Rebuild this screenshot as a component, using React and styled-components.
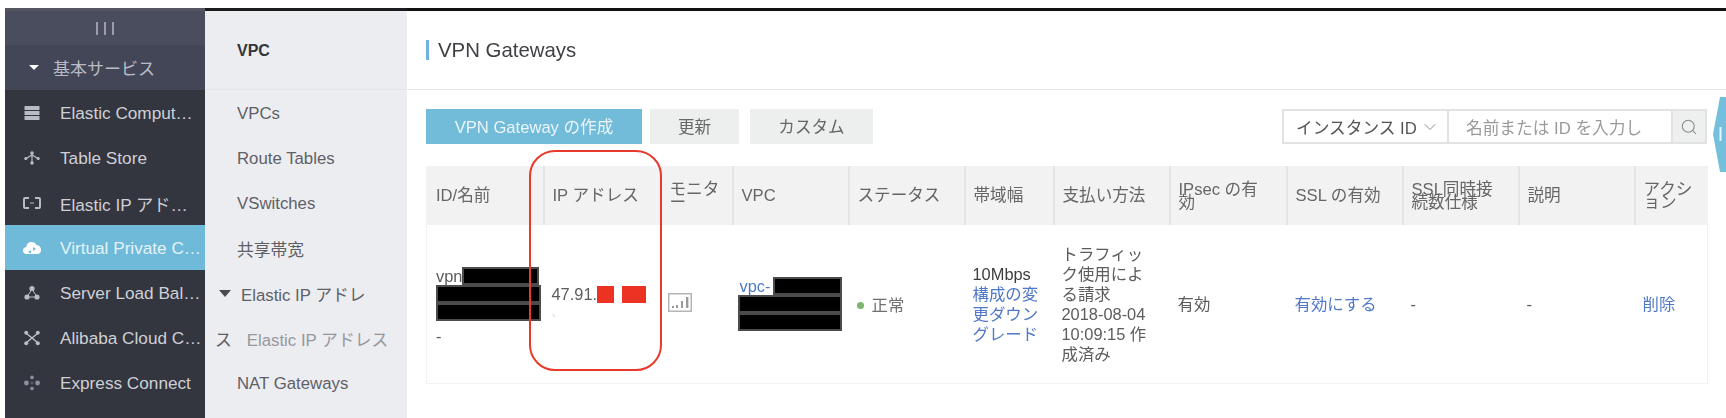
import React from "react"
import styled, { createGlobalStyle } from "styled-components"
import { Search, ChevronDown } from "lucide-react"

const FONT = `"Liberation Sans", "Noto Sans CJK JP", sans-serif`

const COLUMNS = [117, 117, 72, 116, 116, 89, 116, 117, 116, 116, 116, 73]

const App = () => {
  return (
    <Page>
      <GlobalStyle />
      {/* Dark service menu */}
      <Sidebar>
        <Handle>
          <i />
          <i />
          <i />
        </Handle>
        <SectionTitle>
          <Caret />
          基本サービス
        </SectionTitle>
        {services.map(item => (
          <ServiceItem key={item.label} $active={item.active}>
            <ServiceIcon>{item.icon}</ServiceIcon>
            <ServiceLabel>{item.label}</ServiceLabel>
          </ServiceItem>
        ))}
      </Sidebar>

      {/* VPC sub menu */}
      <SubMenu>
        <SubHeader>VPC</SubHeader>
        <SubItem>VPCs</SubItem>
        <SubItem>Route Tables</SubItem>
        <SubItem>VSwitches</SubItem>
        <SubItem>共享帯宽</SubItem>
        <GroupItem>
          <GroupCaret />
          Elastic IP アドレ
        </GroupItem>
        <WrappedItem>
          <span>ス</span>
          <Muted>Elastic IP アドレス</Muted>
        </WrappedItem>
        <SubItem>NAT Gateways</SubItem>
      </SubMenu>

      {/* Content */}
      <Main>
        <TitleBar>
          <Title>VPN Gateways</Title>
        </TitleBar>
        <Body>
          <Toolbar>
            <Actions>
              <Button $primary $width={216}>VPN Gateway の作成</Button>
              <Button $width={89}>更新</Button>
              <Button $width={123} $shift={3}>カスタム</Button>
            </Actions>
            <SearchBox>
              <SearchSelect>
                インスタンス ID
                <ChevronDown size={20} strokeWidth={1} color="#777" />
              </SearchSelect>
              <SearchInput>名前または ID を入力し</SearchInput>
              <SearchButton>
                <Search size={18} strokeWidth={1.4} color="#888" />
              </SearchButton>
            </SearchBox>
          </Toolbar>

          <Table>
            <colgroup>
              {COLUMNS.map((w, i) => (
                <col key={i} width={w} />
              ))}
            </colgroup>
            <thead>
              <tr>
                <Th>ID/名前</Th>
                <Th>IP アドレス</Th>
                <Th>モニタ<br />ー</Th>
                <Th>VPC</Th>
                <Th>ステータス</Th>
                <Th>帯域幅</Th>
                <Th>支払い方法</Th>
                <Th>IPsec の有<br />効</Th>
                <Th>SSL の有効</Th>
                <Th>SSL同時接<br />続数仕様</Th>
                <Th>説明</Th>
                <Th>アクシ<br />ョン</Th>
              </tr>
            </thead>
            <tbody>
              <tr>
                <Td $left={9}>
                  <RedactedLine $offset={4}>
                    vpn
                    <Redacted $width={77} />
                  </RedactedLine>
                  <Redacted $width={105} />
                  <Redacted $width={105} />
                  <Dash>-</Dash>
                </Td>
                <Td>
                  <IpLine>
                    47.91.
                    <RedBlock $width={17} />
                    <Gap />
                    <RedBlock $width={24} />
                  </IpLine>
                  <FaintMark>、</FaintMark>
                </Td>
                <Td>
                  <MonitorIcon viewBox="0 0 24 19">
                    <rect x="0.75" y="0.75" width="22.5" height="17.5" fill="none" stroke="#b4b4b4" strokeWidth="1.5" />
                    <rect x="4" y="13" width="2" height="2" fill="#9a9a9a" />
                    <rect x="8" y="12" width="2" height="3" fill="#9a9a9a" />
                    <rect x="13" y="8" width="2" height="7" fill="#9a9a9a" />
                    <rect x="18" y="4" width="2.4" height="11" fill="#9a9a9a" />
                  </MonitorIcon>
                </Td>
                <Td $left={5}>
                  <RedactedLine>
                    <VpcLink>vpc-</VpcLink>
                    <Redacted $width={69} />
                  </RedactedLine>
                  <Redacted $width={104} />
                  <Redacted $width={104} />
                </Td>
                <Td>
                  <Status>正常</Status>
                </Td>
                <Td>
                  <Dark>10Mbps</Dark>
                  <br />
                  <Link>構成の変<br />更ダウン<br />グレード</Link>
                </Td>
                <Td>
                  トラフィッ<br />ク使用によ<br />る請求<br />2018-08-04<br />10:09:15 作<br />成済み
                </Td>
                <Td>有効</Td>
                <Td><Link>有効にする</Link></Td>
                <Td>-</Td>
                <Td>-</Td>
                <Td><Link>削除</Link></Td>
              </tr>
            </tbody>
          </Table>
        </Body>

        {/* Annotation drawn on top of the screenshot */}
        <Annotation />
        <SideTab viewBox="0 0 13 75">
          <path d="M13 0 L7 0 L0 37 L7 75 L13 75 Z" fill="#74bfdb" />
          <rect x="6.5" y="30" width="2" height="14" fill="#e8f5fa" />
        </SideTab>
      </Main>
    </Page>
  )
}

const services = [
  {
    label: "Elastic Comput…",
    icon: (
      <svg viewBox="0 0 16 16" width="16" height="16" fill="#b9bcc4">
        <rect x="0.5" y="1" width="15" height="4" rx="0.6" />
        <rect x="0.5" y="6" width="15" height="4" rx="0.6" />
        <rect x="0.5" y="11" width="15" height="4" rx="0.6" />
      </svg>
    ),
  },
  {
    label: "Table Store",
    icon: (
      <svg viewBox="0 0 16 16" width="16" height="16" fill="#b9bcc4" stroke="#b9bcc4">
        <path d="M8 3 V12 M2 8.5 L8 5 L14 8.5" fill="none" strokeWidth="1.2" />
        <circle cx="8" cy="3" r="1.8" stroke="none" />
        <circle cx="1.8" cy="8.5" r="1.6" stroke="none" />
        <circle cx="14.2" cy="8.5" r="1.6" stroke="none" />
        <circle cx="8" cy="13" r="1.8" stroke="none" />
      </svg>
    ),
  },
  {
    label: "Elastic IP アド…",
    icon: (
      <svg viewBox="0 0 18 14" width="18" height="14" fill="none" stroke="#b9bcc4" strokeWidth="2">
        <path d="M6 2 H2 Q1 2 1 3 V11 Q1 12 2 12 H6" />
        <path d="M12 2 H16 Q17 2 17 3 V11 Q17 12 16 12 H12" />
        <path d="M7 7 H11" strokeWidth="1" />
      </svg>
    ),
  },
  {
    label: "Virtual Private C…",
    active: true,
    icon: (
      <svg viewBox="0 0 18 14" width="18" height="14">
        <path d="M4 13 Q0 13 0 9.5 Q0 6.5 3.2 6 Q4 1 8.5 1 Q12 1 13.4 4 Q18 4.4 18 9 Q18 13 14 13 Z" fill="#fff" />
        <path d="M10 6 L13 8 L10 10 Z M8 9 L5 11 L8 12.5 Z" fill="#72bbd9" />
      </svg>
    ),
  },
  {
    label: "Server Load Bal…",
    icon: (
      <svg viewBox="0 0 16 16" width="16" height="16" fill="#b9bcc4" stroke="#b9bcc4">
        <path d="M8 4 L3 12 H13 Z" fill="none" strokeWidth="1" />
        <circle cx="8" cy="3.5" r="2.6" stroke="none" />
        <circle cx="3" cy="12" r="2.6" stroke="none" />
        <circle cx="13" cy="12" r="2.6" stroke="none" />
      </svg>
    ),
  },
  {
    label: "Alibaba Cloud C…",
    icon: (
      <svg viewBox="0 0 16 16" width="16" height="16" fill="#b9bcc4" stroke="#b9bcc4">
        <path d="M2 3 L14 13 M14 3 L2 13" fill="none" strokeWidth="1.6" />
        <circle cx="2.2" cy="2.8" r="2" stroke="none" />
        <circle cx="13.8" cy="2.8" r="2" stroke="none" />
        <circle cx="2.2" cy="13.2" r="2" stroke="none" />
        <circle cx="13.8" cy="13.2" r="2" stroke="none" />
      </svg>
    ),
  },
  {
    label: "Express Connect",
    icon: (
      <svg viewBox="0 0 16 16" width="16" height="16" fill="#8d909b">
        <circle cx="8" cy="2.4" r="1.8" />
        <circle cx="8" cy="13.6" r="1.8" />
        <circle cx="2.4" cy="8" r="2.4" />
        <circle cx="13.6" cy="8" r="2.4" />
        <circle cx="8" cy="8" r="1.4" fill="#5b5e6b" />
      </svg>
    ),
  },
]

const GlobalStyle = createGlobalStyle`
  html, body {
    margin: 0;
    padding: 0;
    background: #fff;
  }
`

const Page = styled.div`
  display: flex;
  width: 1726px;
  height: 418px;
  padding: 8px 0 0 5px;
  box-sizing: border-box;
  overflow: hidden;
  font-family: ${FONT};
  filter: blur(0.6px);
`

const Sidebar = styled.nav`
  width: 200px;
  flex: none;
  background: #33353f;
  border-top: 3px solid #55565f;
`

const Handle = styled.div`
  height: 34px;
  display: flex;
  justify-content: center;
  align-items: center;
  gap: 6px;
  background: #4a4d5e;

  i {
    width: 2px;
    height: 13px;
    background: #9b9eaa;
  }
`

const SectionTitle = styled.div`
  height: 45px;
  display: flex;
  align-items: center;
  padding-left: 24px;
  background: #434657;
  color: #b9bcc6;
  font-size: 17px;
`

const Caret = styled.span`
  width: 0;
  height: 0;
  margin-right: 14px;
  border-left: 5px solid transparent;
  border-right: 5px solid transparent;
  border-top: 5px solid #fff;
`

const ServiceItem = styled.div`
  height: 45px;
  display: flex;
  align-items: center;
  background: ${props => (props.$active ? "#6fbad8" : "transparent")};
  color: ${props => (props.$active ? "#e4f2f8" : "#ced0d6")};
  font-size: 17.2px;
`

const ServiceIcon = styled.span`
  width: 55px;
  flex: none;
  display: flex;
  justify-content: center;
  padding-right: 2px;
  box-sizing: border-box;
`

const ServiceLabel = styled.span`
  padding-top: 2px;
  white-space: nowrap;
`

const SubMenu = styled.div`
  width: 202px;
  flex: none;
  background: #ecedf1;
  color: #5f5f66;
  font-size: 16.8px;
  border-top: 3px solid #1c1c1e;
  overflow: hidden;
`

const SubHeader = styled.div`
  height: 79px;
  box-sizing: border-box;
  padding: 31px 0 0 32px;
  color: #33353b;
  font-weight: 700;
  font-size: 16px;
  border-bottom: 1px solid #e4e4e6;
`

const SubItem = styled.div`
  height: 45px;
  box-sizing: border-box;
  padding: 2px 0 0 32px;
  display: flex;
  align-items: center;
  white-space: nowrap;
`

const GroupItem = styled(SubItem)`
  padding-left: 14px;
`

const GroupCaret = styled.span`
  width: 0;
  height: 0;
  margin-right: 10px;
  border-left: 6px solid transparent;
  border-right: 6px solid transparent;
  border-top: 7px solid #4a4a50;
`

const WrappedItem = styled(SubItem)`
  padding-left: 10px;
`

const Muted = styled.span`
  margin-left: 15px;
  color: #96979e;
`

const Main = styled.main`
  position: relative;
  flex: 1;
  min-width: 0;
  border-top: 3px solid #111;
`

const TitleBar = styled.div`
  height: 79px;
  display: flex;
  align-items: center;
  padding-left: 19px;
  box-sizing: border-box;
  border-bottom: 1px solid #e8e8ea;
`

const Title = styled.h1`
  margin: 0;
  padding-left: 9px;
  border-left: 3px solid #6eb4df;
  color: #3f3f44;
  font-size: 20.4px;
  font-weight: 400;
  line-height: 20px;
`

const Body = styled.div`
  padding: 19px 19px 0;
`

const Toolbar = styled.div`
  display: flex;
  justify-content: space-between;
  height: 35px;
  margin-bottom: 22px;
`

const Actions = styled.div`
  display: flex;
  gap: 8px;
`

const Button = styled.div`
  width: ${props => props.$width}px;
  margin-left: ${props => props.$shift || 0}px;
  padding-bottom: 2px;
  box-sizing: border-box;
  display: flex;
  align-items: center;
  justify-content: center;
  background: ${props => (props.$primary ? "#72bbd9" : "#edeeee")};
  color: ${props => (props.$primary ? "#eaf6fb" : "#666")};
  font-size: 16.6px;
`

const SearchBox = styled.div`
  display: flex;
  width: 425px;
  box-sizing: border-box;
  border: 2px solid #e2e2e2;
  color: #555;
  font-size: 16.7px;
`

const SearchSelect = styled.div`
  width: 165px;
  flex: none;
  display: flex;
  align-items: center;
  gap: 3px;
  padding-left: 12px;
  box-sizing: border-box;
  white-space: nowrap;
  border-right: 2px solid #e2e2e2;
`

const SearchInput = styled.div`
  flex: 1;
  display: flex;
  align-items: center;
  padding-left: 17px;
  color: #9a9a9a;
  border-right: 2px solid #e2e2e2;
`

const SearchButton = styled.div`
  width: 32px;
  flex: none;
  display: flex;
  align-items: center;
  justify-content: center;
  background: #eeefef;
`

const Table = styled.table`
  width: 1281px;
  table-layout: fixed;
  border-collapse: collapse;
  border: 1px solid #f1f2f3;
  color: #606060;
  font-size: 16.4px;
`

const Th = styled.th`
  height: 58px;
  padding: 0 0 0 8px;
  background: #f2f2f2;
  border-left: 2px solid #e4e4e4;
  font-size: 16.6px;
  font-weight: 400;
  line-height: 13.5px;
  text-align: left;
  color: #666;
  white-space: nowrap;

  &:first-child {
    padding-left: 9px;
    border-left: 0;
  }
`

const Td = styled.td`
  height: 158px;
  padding: 0 0 0 ${props => props.$left || 8}px;
  line-height: 20px;
  vertical-align: middle;
  white-space: nowrap;
  color: #5c5c5c;
`

const RedactedLine = styled.div`
  display: flex;
  align-items: center;
  height: 18px;
  width: fit-content;
  margin-top: ${props => props.$offset || 0}px;
`

const Redacted = styled.div`
  width: ${props => props.$width}px;
  height: 18px;
  box-sizing: border-box;
  background: #000;
  border: 2px solid #4c4c4c;
`

const Dash = styled.div`
  margin-top: 5px;
`

const IpLine = styled.div`
  display: flex;
  align-items: center;
  height: 18px;
`

const RedBlock = styled.span`
  width: ${props => props.$width}px;
  height: 17px;
  background: #ec3323;
`

const Gap = styled.span`
  width: 8px;
`

const FaintMark = styled.div`
  height: 20px;
  color: #ddd;
  font-size: 12px;
`

const MonitorIcon = styled.svg`
  display: block;
  width: 24px;
  height: 19px;
  margin: -3px 0 0 -1px;
`

const Link = styled.span`
  color: #4f78c9;
`

const VpcLink = styled(Link)`
  width: 35px;
  padding-left: 2px;
  box-sizing: border-box;
`

const Dark = styled.span`
  color: #3d3d3d;
`

const Status = styled.span`
  display: inline-flex;
  align-items: center;
  gap: 8px;
  color: #707070;

  &::before {
    content: "";
    width: 7px;
    height: 7px;
    border-radius: 50%;
    background: #7db56f;
  }
`

const Annotation = styled.div`
  position: absolute;
  left: 122px;
  top: 139px;
  width: 133px;
  height: 221px;
  box-sizing: border-box;
  border: 2px solid #e8392c;
  border-radius: 26px;
`

const SideTab = styled.svg`
  position: absolute;
  right: 0;
  top: 86px;
  width: 13px;
  height: 75px;
`

export default App
